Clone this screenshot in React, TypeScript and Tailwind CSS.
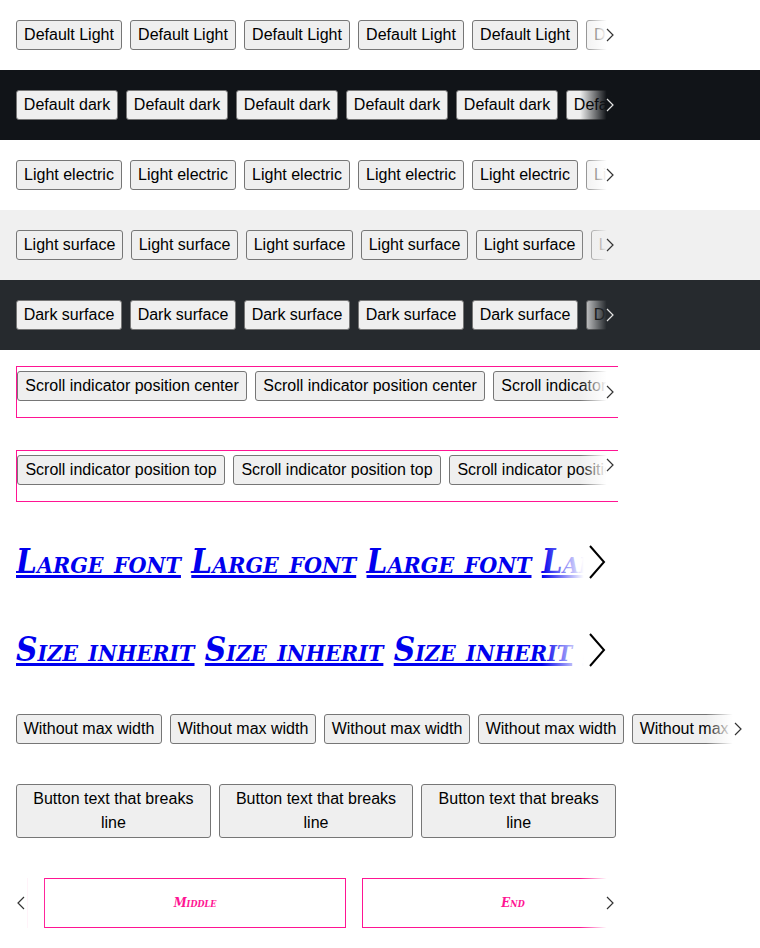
const sans = "font-['Liberation_Sans',Arial,sans-serif]";
const serif = "font-['DejaVu_Serif_Condensed','DejaVu_Serif',serif] [font-stretch:condensed]";

function Chevron({ className = '', dir = 'right' }: { className?: string; dir?: 'left' | 'right' }) {
  return (
    <svg width="8" height="14" viewBox="0 0 8 14" className={className} fill="none" stroke="currentColor" strokeWidth="1.2">
      {dir === 'right' ? <polyline points="1,1 7,7 1,13" /> : <polyline points="7,1 1,7 7,13" />}
    </svg>
  );
}

function Btn({ label, w }: { label: string; w: string }) {
  return (
    <button
      className={`shrink-0 ${w} h-[30px] px-[6px] py-[2px] border border-[#767676] rounded-[3px] bg-[#efefef] text-black text-[16px] leading-6 whitespace-nowrap text-center`}
    >
      {label}
    </button>
  );
}

const bands = [
  { label: 'Default Light', w: 'w-[106px]', bg: 'bg-white', fade: 'to-white', chev: 'text-[#333]' },
  { label: 'Default dark', w: 'w-[102px]', bg: 'bg-[#111418]', fade: 'to-[#111418]', chev: 'text-[#e5e5e5]' },
  { label: 'Light electric', w: 'w-[106px]', bg: 'bg-white', fade: 'to-white', chev: 'text-[#333]' },
  { label: 'Light surface', w: 'w-[107px]', bg: 'bg-[#f0f0f0]', fade: 'to-[#f0f0f0]', chev: 'text-[#333]' },
  { label: 'Dark surface', w: 'w-[106px]', bg: 'bg-[#262a2e]', fade: 'to-[#262a2e]', chev: 'text-[#e5e5e5]' },
];

function Band({ label, w, bg, fade, chev }: (typeof bands)[number]) {
  return (
    <div className={`${bg} px-4 py-5`}>
      <div className="relative w-[602px] overflow-hidden">
        <div className="flex gap-2">
          {Array.from({ length: 7 }).map((_, i) => (
            <Btn key={i} label={label} w={w} />
          ))}
        </div>
        <div className={`absolute inset-y-0 right-0 w-[38px] bg-linear-to-r from-transparent ${fade} to-70%`} />
        <Chevron className={`absolute right-[4px] top-1/2 -translate-y-1/2 ${chev}`} />
      </div>
    </div>
  );
}

function IndicatorBox({ label, w, top }: { label: string; w: string; top?: boolean }) {
  return (
    <div className="relative w-[602px] h-[52px] border-t border-b border-l border-[#ff1493]">
      <div className="overflow-hidden pt-[4px] h-full">
        <div className="flex gap-2">
          {Array.from({ length: 4 }).map((_, i) => (
            <Btn key={i} label={label} w={w} />
          ))}
        </div>
      </div>
      <div className="absolute top-0 bottom-0 right-0 w-[38px] bg-linear-to-r from-transparent to-white to-70%" />
      <Chevron
        className={
          top
            ? 'absolute right-[4px] top-[7px] text-[#333]'
            : 'absolute right-[4px] top-1/2 -translate-y-1/2 text-[#333]'
        }
      />
    </div>
  );
}

function BigLinks({ label }: { label: string }) {
  return (
    <div className="relative w-[602px] h-[56px] overflow-hidden flex items-center">
      <div className={`whitespace-nowrap text-[33px] leading-[56px] font-bold italic [font-variant-caps:small-caps] ${serif}`}>
        {Array.from({ length: 5 }).map((_, i) => (
          <span key={i}>
            <a href="#" className="text-[#0000ee] underline decoration-[3px]">
              {label}
            </a>{' '}
          </span>
        ))}
      </div>
      <div className="absolute inset-y-0 right-0 w-[76px] bg-linear-to-r from-transparent to-white to-55%" />
      <svg
        width="17"
        height="34"
        viewBox="0 0 17 34"
        className="absolute right-[12px] top-1/2 -translate-y-1/2 text-black"
        fill="none"
        stroke="currentColor"
        strokeWidth="2"
      >
        <polyline points="1,1 15,17 1,33" />
      </svg>
    </div>
  );
}

function SlideBox({ label }: { label: string }) {
  return (
    <div className="shrink-0 w-[302px] h-[50px] border border-[#ff1493] flex items-center justify-center">
      <span className={`text-[#ff1493] text-[13px] font-bold italic [font-variant-caps:small-caps] ${serif}`}>{label}</span>
    </div>
  );
}

export default function App() {
  return (
    <div className={`${sans} bg-white w-[760px] min-h-[948px]`}>
      {bands.map((b) => (
        <Band key={b.label} {...b} />
      ))}

      <div className="px-4 pt-4 flex flex-col gap-8">
        <IndicatorBox label="Scroll indicator position center" w="w-[230px]" />
        <IndicatorBox label="Scroll indicator position top" w="w-[208px]" top />
        <BigLinks label="Large font" />
        <BigLinks label="Size inherit" />

        <div className="relative w-[728px] overflow-hidden mt-1">
          <div className="flex gap-2">
            {Array.from({ length: 6 }).map((_, i) => (
              <Btn key={i} label="Without max width" w="w-[146px]" />
            ))}
          </div>
          <div className="absolute inset-y-0 right-0 w-[38px] bg-linear-to-r from-transparent to-white to-70%" />
          <Chevron className="absolute right-[2px] top-1/2 -translate-y-1/2 text-[#333]" />
        </div>

        <div className="flex gap-2 mt-2">
          {Array.from({ length: 3 }).map((_, i) => (
            <button
              key={i}
              className="w-[194.67px] h-[54px] px-[6px] py-[2px] border border-[#767676] rounded-[3px] bg-[#efefef] text-black text-[16px] leading-6 text-center"
            >
              Button text that breaks line
            </button>
          ))}
        </div>

        <div className="relative w-[602px] h-[50px] overflow-hidden mt-2 mb-5">
          <div className="flex gap-4 -ml-[290px]">
            <SlideBox label="Start" />
            <SlideBox label="Middle" />
            <SlideBox label="End" />
          </div>
          <div className="absolute inset-y-0 left-0 w-[30px] bg-linear-to-r from-white from-35% to-transparent" />
          <Chevron dir="left" className="absolute left-[1px] top-1/2 -translate-y-1/2 text-[#333]" />
          <div className="absolute inset-y-0 right-0 w-[38px] bg-linear-to-r from-transparent to-white to-70%" />
          <Chevron className="absolute right-[4px] top-1/2 -translate-y-1/2 text-[#333]" />
        </div>
      </div>
    </div>
  );
}
